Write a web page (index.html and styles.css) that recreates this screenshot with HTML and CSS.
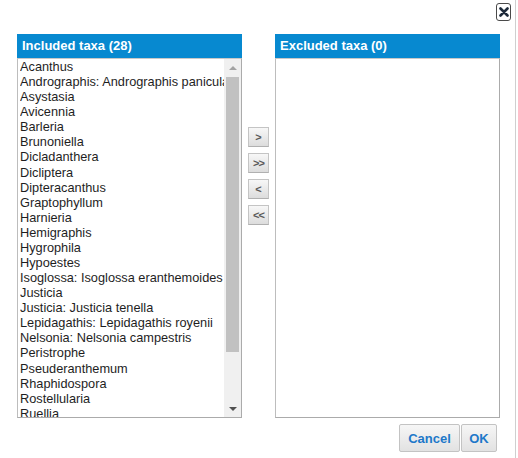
FILE: index.html
```html
<!DOCTYPE html>
<html>
<head>
<meta charset="utf-8">
<link rel="stylesheet" href="styles.css">
</head>
<body>
<div class="dialog">
  <div class="titlebar">
    <button class="close" title="Close">
      <svg width="10" height="10" viewBox="0 0 10 10"><path d="M1.5 1.5 L8.5 8.5 M8.5 1.5 L1.5 8.5" stroke="#1d2a3a" stroke-width="2.6" stroke-linecap="round"/></svg>
    </button>
  </div>
  <div class="panes">
    <div class="pane">
      <div class="pane-head">Included taxa (28)</div>
      <div class="pane-box">
        <ul class="list">
          <li>Acanthus</li>
          <li>Andrographis: Andrographis paniculata</li>
          <li>Asystasia</li>
          <li>Avicennia</li>
          <li>Barleria</li>
          <li>Brunoniella</li>
          <li>Dicladanthera</li>
          <li>Dicliptera</li>
          <li>Dipteracanthus</li>
          <li>Graptophyllum</li>
          <li>Harnieria</li>
          <li>Hemigraphis</li>
          <li>Hygrophila</li>
          <li>Hypoestes</li>
          <li>Isoglossa: Isoglossa eranthemoides</li>
          <li>Justicia</li>
          <li>Justicia: Justicia tenella</li>
          <li>Lepidagathis: Lepidagathis royenii</li>
          <li>Nelsonia: Nelsonia campestris</li>
          <li>Peristrophe</li>
          <li>Pseuderanthemum</li>
          <li>Rhaphidospora</li>
          <li>Rostellularia</li>
          <li>Ruellia</li>
          <li>Staurogyne</li>
          <li>Strobilanthes</li>
          <li>Thunbergia</li>
          <li>Xerothamnella</li>
        </ul>
        <div class="scrollbar">
          <div class="sb-arrow up"></div>
          <div class="sb-track"><div class="sb-thumb"></div></div>
          <div class="sb-arrow down"></div>
        </div>
      </div>
    </div>
    <div class="movers">
      <button class="mover">&gt;</button>
      <button class="mover tight">&gt;&gt;</button>
      <button class="mover">&lt;</button>
      <button class="mover tight">&lt;&lt;</button>
    </div>
    <div class="pane">
      <div class="pane-head">Excluded taxa (0)</div>
      <div class="pane-box empty"></div>
    </div>
  </div>
  <div class="actions">
    <button class="action cancel">Cancel</button>
    <button class="action ok">OK</button>
  </div>
</div>
</body>
</html>
```
FILE: styles.css
```css
html, body {
  margin: 0;
  padding: 0;
  background: #fff;
}
body {
  font-family: "Liberation Sans", Arial, sans-serif;
  width: 518px;
  height: 458px;
  overflow: hidden;
}
.dialog {
  width: 515px;
  height: 458px;
  border-right: 1px solid #cfcfcf;
  box-sizing: content-box;
  display: flex;
  flex-direction: column;
}
.titlebar {
  height: 34px;
  display: flex;
  justify-content: flex-end;
  align-items: flex-start;
  padding-right: 4px;
  box-sizing: border-box;
}
.close {
  margin-top: 3px;
  width: 15px;
  height: 18px;
  padding: 0;
  border: 1px solid #4a4a4a;
  border-radius: 3px;
  background: #fff;
  display: flex;
  align-items: center;
  justify-content: center;
}
.panes {
  display: flex;
  padding-left: 17px;
}
.pane {
  width: 225px;
  display: flex;
  flex-direction: column;
}
.pane-head {
  height: 24px;
  background: #0789d0;
  color: #fff;
  font-weight: bold;
  font-size: 13px;
  line-height: 24px;
  padding-left: 5px;
  box-sizing: border-box;
}
.pane-box {
  height: 360px;
  border: 1px solid #ababab;
  border-top-color: #c8c8c8;
  border-left-color: #bdbdbd;
  box-sizing: border-box;
  display: flex;
  background: #fff;
}
.list {
  list-style: none;
  margin: 0;
  padding: 0 0 0 2px;
  flex: 1;
  min-width: 0;
  overflow: hidden;
  font-size: 12.75px;
  color: #1e1e1e;
}
.list li {
  height: 15.09px;
  line-height: 15px;
  white-space: nowrap;
  overflow: hidden;
}
.scrollbar {
  width: 17px;
  background: #f0f0f0;
  display: flex;
  flex-direction: column;
}
.sb-arrow {
  height: 17px;
  display: flex;
  align-items: center;
  justify-content: center;
}
.sb-arrow::before {
  content: "";
  width: 0;
  height: 0;
  border-left: 4px solid transparent;
  border-right: 4px solid transparent;
}
.sb-arrow.up::before {
  border-bottom: 4px solid #a3a3a3;
}
.sb-arrow.down::before {
  border-top: 4px solid #505050;
}
.sb-track {
  flex: 1;
  padding: 1px 2px 0 2px;
}
.sb-thumb {
  height: 275px;
  background: #c1c1c1;
}
.movers {
  width: 33px;
  display: flex;
  flex-direction: column;
  align-items: center;
  gap: 6px;
  padding-top: 93px;
}
.mover {
  width: 21px;
  height: 20px;
  padding: 0;
  border: 1px solid #c4c4c4;
  border-bottom-color: #b0b0b0;
  background: linear-gradient(#f7f7f7, #dcdcdc);
  color: #5a5a5a;
  font-family: "Liberation Sans", Arial, sans-serif;
  font-weight: bold;
  font-size: 11px;
  line-height: 18px;
}
.mover.tight {
  letter-spacing: -1px;
}
.actions {
  display: flex;
  justify-content: flex-end;
  padding-right: 18px;
  margin-top: 6px;
}
.action {
  height: 28px;
  padding: 0;
  border: 1px solid #c3c3c3;
  border-radius: 2px;
  background: linear-gradient(#f6f6f6, #e2e2e2);
  color: #1d78c9;
  font-family: "Liberation Sans", Arial, sans-serif;
  font-weight: bold;
  font-size: 13px;
}
.cancel {
  width: 61px;
  margin-right: 1px;
}
.ok {
  width: 36px;
}
```
